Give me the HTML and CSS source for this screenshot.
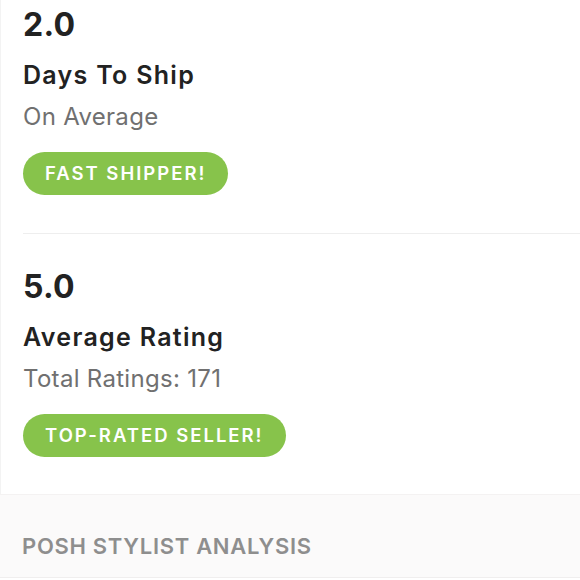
FILE: index.html
```html
<!DOCTYPE html>
<html>
<head>
<meta charset="utf-8">
<link rel="stylesheet" href="styles.css">
</head>
<body>
<div class="card">
  <div class="stat">
    <div class="value">2.0</div>
    <div class="label">Days To Ship</div>
    <div class="sub">On Average</div>
    <div class="badge">FAST SHIPPER!</div>
  </div>
  <div class="stat second">
    <div class="value">5.0</div>
    <div class="label">Average Rating</div>
    <div class="sub">Total Ratings: 171</div>
    <div class="badge">TOP-RATED SELLER!</div>
  </div>
</div>
<div class="section-head">
  <div class="section-title">POSH STYLIST ANALYSIS</div>
</div>
</body>
</html>
```
FILE: styles.css
```css
html, body {
  margin: 0;
  padding: 0;
  background: #ffffff;
  font-family: Inter, "Open Sans", sans-serif;
  color: #222222;
}
.card {
  background: #ffffff;
  border-left: 1px solid #f3f3f3;
  padding-left: 22px;
}
.stat {
  display: flex;
  flex-direction: column;
  align-items: flex-start;
  padding-top: 5px;
  padding-bottom: 38px;
}
.stat.second {
  border-top: 1px solid #eeeeee;
  padding-top: 33px;
  padding-bottom: 37px;
}
.value {
  font-size: 32px;
  font-weight: 700;
  line-height: 40px;
  letter-spacing: 0.3px;
  color: #222222;
}
.label {
  font-size: 25px;
  font-weight: 600;
  line-height: 32px;
  margin-top: 14px;
  letter-spacing: 1.3px;
  color: #222222;
}
.sub {
  font-size: 24px;
  font-weight: 400;
  line-height: 30px;
  margin-top: 11px;
  letter-spacing: 0.3px;
  color: #707070;
}
.badge {
  margin-top: 20px;
  height: 43px;
  line-height: 43px;
  padding: 0 22px;
  border-radius: 22px;
  background: #87c34b;
  color: #ffffff;
  font-size: 18.5px;
  font-weight: 600;
  letter-spacing: 2px;
}
.section-head {
  background: #fbfafa;
  border-top: 1px solid #f4f2f2;
  border-bottom: 1px solid #f0eeee;
  padding: 38px 22px 18px;
}
.section-title {
  font-size: 22px;
  font-weight: 600;
  color: #8e8e8e;
  letter-spacing: 0.7px;
  line-height: 26px;
}
```
